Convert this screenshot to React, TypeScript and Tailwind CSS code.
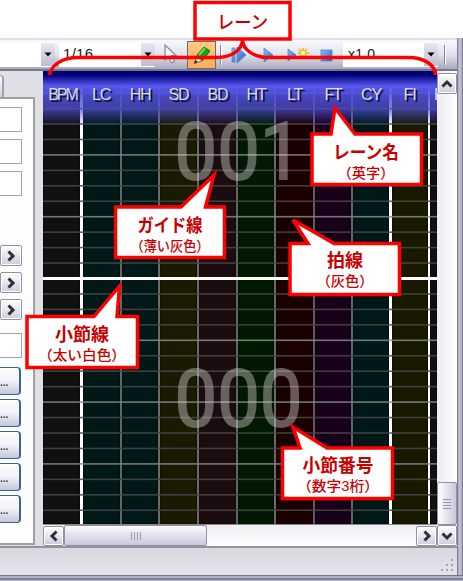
import React from "react";

const lanes = [
  { name: "BPM", bg: "bg-[#101010]", w: "w-[37px]", line: "" },
  { name: "LC", bg: "bg-[#001818]", w: "w-[40px]", line: "border-l-[3px] border-white" },
  { name: "HH", bg: "bg-[#001818]", w: "w-[38px]", line: "border-l-2 border-[#606868]" },
  { name: "SD", bg: "bg-[#1a1a00]", w: "w-[39px]", line: "border-l-2 border-[#6b6b68]" },
  { name: "BD", bg: "bg-[#1b0d0f]", w: "w-[39px]", line: "border-l-2 border-[#6b6b68]" },
  { name: "HT", bg: "bg-[#001900]", w: "w-[38px]", line: "border-l-2 border-[#606860]" },
  { name: "LT", bg: "bg-[#1b0000]", w: "w-[39px]", line: "border-l-2 border-[#6b6868]" },
  { name: "FT", bg: "bg-[#18001a]", w: "w-[38px]", line: "border-l-2 border-[#655865]" },
  { name: "CY", bg: "bg-[#001818]", w: "w-[38px]", line: "border-l-2 border-[#606868]" },
  { name: "FI", bg: "bg-[#191900]", w: "w-[39px]", line: "border-l-[3px] border-white" },
  { name: "B", bg: "bg-[#101010]", w: "w-[9px]", line: "border-l-2 border-white" },
];

const fields = ["a", "b", "c"];
const guides = Array.from({ length: 30 }, (_, i) => i - 12);

function Chevron({ turn }: { turn: string }) {
  return (
    <svg viewBox="0 0 12 12" className={`h-3 w-3 ${turn}`}>
      <path d="M3.500 1.500 8 6l-4.500 4.500" fill="none" stroke="#303034" strokeWidth="3" />
    </svg>
  );
}

function ArrowBox({ size, turn }: { size: string; turn: string }) {
  return (
    <div className={`flex shrink-0 items-center justify-center rounded-[2px] border border-[#9292a4] bg-gradient-to-b from-white to-[#cdcddd] ring-1 ring-inset ring-white ${size}`}>
      <Chevron turn={turn} />
    </div>
  );
}

function DropArrow() {
  return (
    <div className="flex h-[23px] w-[14px] shrink-0 items-center justify-center bg-gradient-to-b from-[#e8e8f0] to-[#bdbdd0]">
      <svg viewBox="0 0 8 5" className="h-[5px] w-2"><path d="M.5.5h7L4 4.500z" fill="#000" /></svg>
    </div>
  );
}

function Toolbar() {
  return (
    <div className="flex h-[33px] shrink-0 items-center border-t-2 border-b-2 border-t-[#dedee8] border-b-[#77778c] bg-gradient-to-b from-[#f9f9fc] via-[#e2e2ec] to-[#aaaac0] text-[#202020]">
      <div className="flex h-[25px] w-[55px] items-center justify-end bg-white"><DropArrow /></div>
      <div className="ml-[4px] flex h-[25px] w-[96px] items-center justify-between bg-white pl-[4px]">
        <span className="text-[15px] tracking-[0.3px]">1/16</span><DropArrow />
      </div>
      <svg viewBox="0 0 14 21" className="ml-[9px] h-[21px] w-[14px]">
        <path d="M1 1v15l3.500-3.500 3 6.500 3-1.500-3-6H12z" fill="#f2f4fb" stroke="#7c8ba4" strokeWidth="1.2" />
      </svg>
      <div className="ml-[9px] flex h-[28px] w-[29px] items-center justify-center border border-[#6b6878] bg-gradient-to-b from-[#ffca83] to-[#ffad53]">
        <svg viewBox="0 0 20 20" className="h-5 w-5">
          <path d="M5 10 12 2l6 4-8 10z" fill="#17a31b" stroke="#087510" />
          <path d="m7 10 6-7" stroke="#75df4a" strokeWidth="2" />
          <path d="m5 10 5 6-7 2z" fill="#ece6c6" stroke="#555" strokeWidth=".7" />
          <path d="m3 15 3 2-4 2z" fill="#222" />
        </svg>
      </div>
      <div className="ml-[4px] h-[20px] w-[2px] border-r border-white bg-[#85859d]" />
      <svg viewBox="0 0 105 20" className="ml-[9px] h-5 w-[105px] shrink-0">
        <defs><linearGradient id="play" x1="0" x2="1" y2="1"><stop stopColor="#8fc0fa" /><stop offset="1" stopColor="#245fc2" /></linearGradient></defs>
        <g fill="url(#play)" stroke="#4778c7" strokeWidth=".7">
          <path d="M1 3h3v14H1zM6 2l9 8-9 8z" /><path d="M33 3l9 7-9 7z" /><path d="M57 4l8 6-8 6z" />
          <rect x="90" y="5" width="11" height="11" />
        </g>
        <path d="M72 3v11M67 8h11M68 4l8 8M76 4l-8 8" stroke="#ecc43b" strokeWidth="2" />
        <circle cx="72" cy="8" r="2" fill="#fffbd0" />
      </svg>
      <div className="ml-[7px] flex h-[25px] w-[95px] shrink-0 items-center justify-between bg-white pl-[5px]"><span className="text-[14px] tracking-[0.2px]">x1.0</span><DropArrow /></div>
      <div className="ml-[6px] h-[20px] w-[2px] border-r border-white bg-[#85859d]" />
    </div>
  );
}

function SidePanel() {
  return (
    <div className="flex w-[43px] shrink-0 flex-col bg-[#dfdfe5]">
      <div className="mt-[4px] h-[22px] w-[4px] rounded-tr-[4px] border-t border-r-2 border-[#99a5ad] bg-gradient-to-b from-white to-[#cfcfe0]" />
      <div className="flex h-[448px] w-[35px] flex-col border-t-2 border-r-2 border-b-2 border-[#9ba39e] bg-[#fdfdfd]">
        <div className="mt-[8px] flex flex-col gap-[7px]">
          {fields.map((f) => <div key={f} className="h-[25px] w-[22px] border-y border-r border-[#9aa5ad] bg-white" />)}
        </div>
        <div className="mt-[49px] flex flex-col gap-[6px]">
          {fields.map((f) => <ArrowBox key={f} size="h-[21px] w-[22px]" turn="" />)}
        </div>
        <div className="mt-[13px] h-[25px] w-[22px] border-y border-r border-[#9aa5ad] bg-white" />
        <div className="mt-[9px] flex flex-col gap-[4px]">
          {[0, 1, 2, 3, 4].map((n) => (
            <div key={n} className="flex h-[28px] w-[21px] items-center rounded-r-[4px] border-y-[1.5px] border-r-2 border-[#366590] bg-gradient-to-b from-white via-[#f1f1f8] to-[#c7c7dc] pt-[2px] text-[10px] font-bold text-[#444]">...</div>
          ))}
        </div>
      </div>
    </div>
  );
}

function Chart() {
  return (
    <div className="relative h-[453px] w-[394px] overflow-hidden bg-black">
      <div className="flex h-full">
        {lanes.map((lane) => <div key={lane.name} className={`shrink-0 shadow-[inset_0_0_2px_#000] ${lane.w} ${lane.bg} ${lane.line}`} />)}
      </div>
      <svg viewBox="0 0 394 453" className="absolute inset-0 h-full w-full">
        {guides.map((i) => (
          <rect key={i} x="0" y={207.5 + i * 15.45 - (i === 0 ? 1.5 : 0.8)} width="394" height={i === 0 ? 3 : 1.6} fill={i === 0 ? "#fff" : i % 4 === 0 ? "#858989" : "#464848"} fillOpacity={i === 0 ? 1 : 0.85} />
        ))}
        <g fill="#ddd" stroke="#ddd" strokeWidth="1.8" opacity=".4" fontFamily="Roboto, Liberation Sans, sans-serif" fontSize="80">
          <text x="131.500" y="107.500" textLength="128" lengthAdjust="spacingAndGlyphs">001</text>
          <text x="131.500" y="354.500" textLength="128" lengthAdjust="spacingAndGlyphs">000</text>
        </g>
      </svg>
      <div className="absolute inset-x-0 top-0 h-[54px] bg-[linear-gradient(#000065_0px,#000079_4px,#5858ef_15px,#5050dfdd_25px,#5050d6b8_38px,#5050d600_54px)]" />
      <div className="absolute top-[15px] left-0 flex text-[16px] leading-[18px] text-[#d7d9ea] [text-shadow:2px_2px_0_#101030]">
        {lanes.map((lane) => (
          <div key={lane.name} className={`shrink-0 ${lane.w} ${lane.name === "B" ? "pl-[4px] text-left" : "text-center"}`}>
            <span className={lane.name === "BPM" ? "ml-[2px] tracking-[-2px]" : "ml-[2px] tracking-[-1.2px]"}>{lane.name}</span>
          </div>
        ))}
      </div>
    </div>
  );
}

function Callout({ shape, x, y, title, sub, titleWidth, subWidth }: { shape: string; x: number; y: number; title: string; sub: string; titleWidth: number; subWidth: number }) {
  return (
    <g>
      <path d={shape} fill="white" stroke="#f00" strokeWidth="3.500" />
      <text x={x - titleWidth / 2} y={y} fontSize="18" fontWeight="bold" textLength={titleWidth} lengthAdjust="spacingAndGlyphs">{title}</text>
      <text x={x - subWidth / 2} y={y + 19} fontSize="14" fontWeight="500" textLength={subWidth} lengthAdjust="spacingAndGlyphs">{sub}</text>
    </g>
  );
}

function Annotations() {
  return (
    <svg viewBox="0 0 463 581" className="absolute inset-0 h-[581px] w-[463px]" fill="#c80000" fontFamily="Liberation Sans, Noto Sans CJK JP, sans-serif">
      <path d="M49.500 75C51 66 61 57.500 78 57.500H217C230 57.500 242 51 242.500 40C243 51 256 57.500 268 57.500H408C425 57.500 435 65 435.500 75" fill="none" stroke="#f00" strokeWidth="3.500" />
      <rect x="195" y="2.500" width="95" height="36.500" fill="white" stroke="#f00" strokeWidth="3.500" />
      <text x="217" y="29" fontSize="18" fontWeight="500" textLength="51" lengthAdjust="spacingAndGlyphs">レーン</text>
      <Callout shape="M312 134H331L335 108L355 134H421.500V184.500H312Z" x={366} y={159} title="レーン名" sub="（英字）" titleWidth={66} subWidth={57} />
      <Callout shape="M115.500 207H181L214 175L205.500 207H224.500V257.500H115.500Z" x={170} y={232} title="ガイド線" sub="（薄い灰色）" titleWidth={65} subWidth={79} />
      <Callout shape="M290 243.500H308L293 220L334 243.500H399.500V294.500H290Z" x={345} y={267} title="拍線" sub="（灰色）" titleWidth={36} subWidth={57} />
      <Callout shape="M27 316.500H94L119.500 286L117 316.500H137.500V367.500H27Z" x={82} y={341} title="小節線" sub="（太い白色）" titleWidth={54} subWidth={88} />
      <Callout shape="M282.500 448H300L293 427L327 448H392.500V498.500H282.500Z" x={338} y={472} title="小節番号" sub="（数字3桁）" titleWidth={71} subWidth={82} />
    </svg>
  );
}

export default function App() {
  return (
    <div className="relative flex h-[581px] w-[463px] flex-col overflow-hidden bg-white pt-[38px] font-['Liberation_Sans',Arial,sans-serif]">
      <div className="flex h-[543px] border-b-[6px] border-[#73738d]">
        <div className="flex w-[457px] flex-col bg-[#dfdfe5]">
          <Toolbar />
          <div className="flex h-[477px] border-b-2 border-[#92929e]">
            <SidePanel />
            <div className="flex w-[394px] flex-col">
              <Chart />
              <div className="flex h-[22px] items-center border-t border-[#888] bg-gradient-to-b from-[#eeeef4] to-white">
                <ArrowBox size="h-[20px] w-[21px]" turn="rotate-180" />
                <div className="flex h-[21px] w-[143px] items-center justify-center gap-[2px] rounded-[2px] border border-[#9292a4] bg-gradient-to-b from-[#fafaff] to-[#c9c9db]">
                  {[0, 1, 2, 3].map((n) => <div key={n} className="h-2 w-px bg-[#9999ac]" />)}
                </div>
                <div className="grow" />
                <ArrowBox size="h-[20px] w-[21px]" turn="" />
              </div>
            </div>
            <div className="flex w-[20px] flex-col bg-gradient-to-r from-[#ececf2] to-white">
              <ArrowBox size="mt-[2px] h-[21px] w-[20px]" turn="-rotate-90" />
              <div className="grow" />
              <div className="flex h-[43px] flex-col items-center justify-center gap-[2px] rounded-[2px] border border-[#9292a4] bg-gradient-to-r from-white to-[#c8c8dc]">
                {[0, 1, 2, 3].map((n) => <div key={n} className="h-px w-2 bg-[#9999ac]" />)}
              </div>
              <ArrowBox size="h-[21px] w-[20px]" turn="rotate-90" />
            </div>
          </div>
          <div className="flex grow items-end justify-end bg-gradient-to-b from-[#d8d8df] to-[#e4e4ea] pr-[3px] pb-[3px]">
            <svg viewBox="0 0 14 14" className="h-[14px] w-[14px] fill-[#a5a5ad]">
              <path d="M11 1h2v2h-2zM6 6h2v2H6zM11 6h2v2h-2zM1 11h2v2H1zM6 11h2v2H6zM11 11h2v2h-2z" />
            </svg>
          </div>
        </div>
        <div className="h-[543px] w-[6px] bg-[linear-gradient(90deg,#77778d_0px,#85859b_1px,#d8d8e4_2px,#aaaac0_3px,#cacada_4px,#666680_6px)]" />
      </div>
      <div className="absolute right-0 bottom-0 left-0 h-[6px] bg-[linear-gradient(#666680_0px,#85859b_1px,#d8d8e4_2px,#8888a2_3px,#77779b_5px,#eeeef5_6px)]" />
      <Annotations />
    </div>
  );
}
